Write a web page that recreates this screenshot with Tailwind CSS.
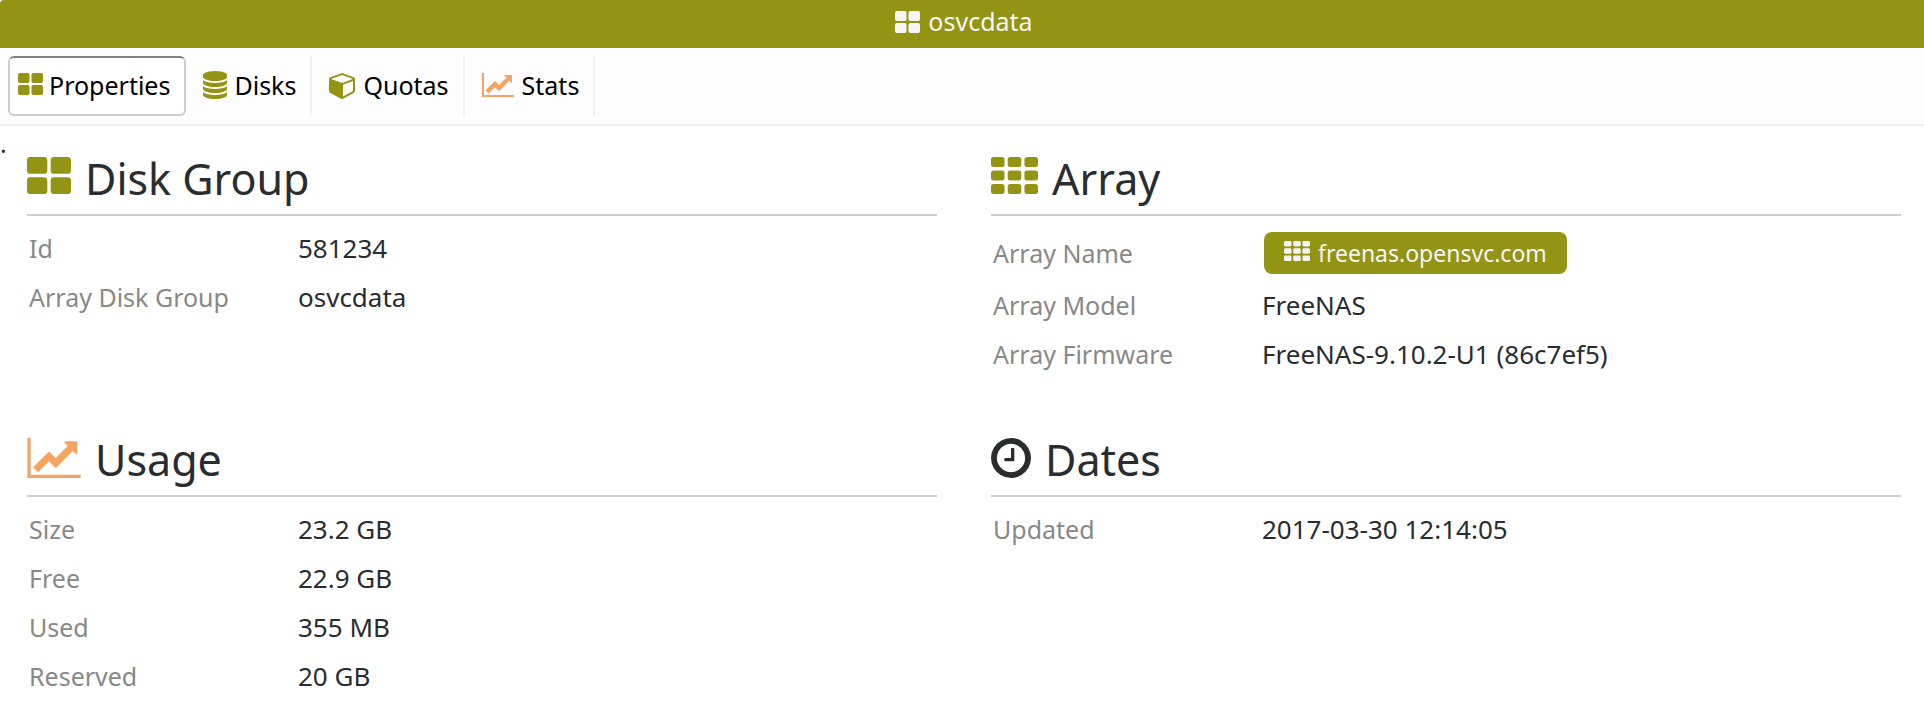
<!DOCTYPE html>
<html lang="en">
<head>
<meta charset="utf-8">
<title>osvcdata</title>
<script src="https://cdn.jsdelivr.net/npm/@tailwindcss/browser@4"></script>
</head>
<body class="min-h-screen bg-white font-['Noto_Sans',sans-serif] text-[25px] leading-[35px] text-[#2a2c2e]">
<svg class="hidden" aria-hidden="true">
  <symbol id="th-large" viewBox="0 0 1664 1408" preserveAspectRatio="none"><rect width="768" height="640" rx="128"/><rect x="896" width="768" height="640" rx="128"/><rect y="768" width="768" height="640" rx="128"/><rect x="896" y="768" width="768" height="640" rx="128"/></symbol>
  <symbol id="th" viewBox="0 0 1664 1408" preserveAspectRatio="none"><rect width="480" height="384" rx="96"/><rect x="592" width="480" height="384" rx="96"/><rect x="1184" width="480" height="384" rx="96"/><rect y="512" width="480" height="384" rx="96"/><rect x="592" y="512" width="480" height="384" rx="96"/><rect x="1184" y="512" width="480" height="384" rx="96"/><rect y="1024" width="480" height="384" rx="96"/><rect x="592" y="1024" width="480" height="384" rx="96"/><rect x="1184" y="1024" width="480" height="384" rx="96"/></symbol>
  <symbol id="database" viewBox="0 0 1536 1792"><path d="M768 768q237 0 443-43t325-127v170q0 69-103 128t-280 93.500-385 34.500-385-34.500T103 896 0 768V598q119 84 325 127t443 43zm0 768q237 0 443-43t325-127v170q0 69-103 128t-280 93.500-385 34.500-385-34.500T103 1664 0 1536v-170q119 84 325 127t443 43zm0-384q237 0 443-43t325-127v170q0 69-103 128t-280 93.500-385 34.500-385-34.500T103 1280 0 1152V982q119 84 325 127t443 43zM768 0q208 0 385 34.500T1433 128t103 128v128q0 69-103 128t-280 93.500T768 640t-385-34.500T103 512 0 384V256q0-69 103-128t280-93.500T768 0z"/></symbol>
  <symbol id="cube" viewBox="64 0 1664 1792"><path d="M896 1629l640-349V644l-640 233v752zm-64-865l698-254-698-254-698 254zm832-252v768q0 35-18 65t-49 47l-704 384q-28 16-61 16t-61-16L67 1392q-31-17-49-47t-18-65V512q0-40 23-73t61-47l704-256q22-8 44-8t44 8l704 256q38 14 61 47t23 73z" transform="translate(64 0)"/></symbol>
  <symbol id="line-chart" viewBox="0 0 2048 1536"><path d="M2048 1408v128H0V0h128v1408h1920zM1920 160v435q0 21-19.500 29.500T1866 617l-121-121-633 633q-10 10-23 10t-23-10l-233-233-416 416-192-192 585-585q10-10 23-10t23 10l233 233 464-464-121-121q-16-16-7.500-35.500T1581 128h307q14 0 23 9t9 23z"/></symbol>
  <symbol id="clock" viewBox="0 0 1536 1536"><path d="M896 416v448q0 14-9 23t-23 9H544q-14 0-23-9t-9-23v-64q0-14 9-23t23-9h224V416q0-14 9-23t23-9h64q14 0 23 9t9 23zm416 352q0-148-73-273t-198-198-273-73-273 73-198 198-73 273 73 273 198 198 273 73 273-73 198-198 73-273zm224 0q0 209-103 385.500T1153.500 1433 768 1536t-385.500-103T103 1153.500 0 768t103-385.500T382.500 103 768 0t385.500 103T1433 382.500 1536 768z"/></symbol>
</svg>

<header class="flex h-12 items-center justify-center gap-2 rounded-tl-sm bg-[#939413] pb-1 pl-1 text-[#f5f5f5]">
  <svg class="h-[22px] w-[25px] fill-current" aria-hidden="true"><use href="#th-large"/></svg>
  <h1 class="pb-0.5">osvcdata</h1>
</header>

<nav class="flex h-[78px] border-b-2 border-[#eee] bg-[#fdfdfd] px-2 py-2 text-black">
  <button type="button" class="flex h-[60px] items-center gap-[6px] rounded-md border-2 border-[#ccc] border-t-[#808285] bg-white pr-[14px] pb-0.5 pl-2"><svg class="mb-0.5 h-[22px] w-[25px] fill-[#939413]" aria-hidden="true"><use href="#th-large"/></svg>Properties</button>
  <button type="button" class="flex h-[60px] items-center gap-[7px] border-r-2 border-[#f2f2f2] pr-[14px] pb-0.5 pl-[17px]"><svg class="h-7 w-6 fill-[#939413]" aria-hidden="true"><use href="#database"/></svg>Disks</button>
  <button type="button" class="flex h-[60px] items-center gap-2 border-r-2 border-[#f2f2f2] pr-[14px] pb-0.5 pl-[17px]"><svg class="h-7 w-[26px] fill-[#939413]" aria-hidden="true"><use href="#cube"/></svg>Quotas</button>
  <button type="button" class="flex h-[60px] items-center gap-2 border-r-2 border-[#f2f2f2] pr-[14px] pb-0.5 pl-[17px]"><svg class="h-6 w-8 fill-[#f4a460]" aria-hidden="true"><use href="#line-chart"/></svg>Stats</button>
</nav>

<main>
  <p class="h-[22px]">.</p>
  <div class="grid grid-cols-2 gap-x-[54px] pr-[23px] pl-[27px]">
    <section class="min-h-[281px]">
      <h2 class="flex h-[68px] items-center gap-[14px] border-b-2 border-[#ccc] pb-[6px] text-[43px]"><svg class="mb-[6px] h-[37px] w-11 fill-[#939413]" aria-hidden="true"><use href="#th-large"/></svg>Disk Group</h2>
      <dl class="grid grid-cols-[269px_1fr] pt-2 pl-[2px]">
        <dt class="py-[7px] text-[#888]">Id</dt><dd class="py-[7px] text-[26px]">581234</dd>
        <dt class="py-[7px] text-[#888]">Array Disk Group</dt><dd class="py-[7px] text-[26px]">osvcdata</dd>
      </dl>
    </section>
    <section class="min-h-[281px]">
      <h2 class="flex h-[68px] items-center gap-[14px] border-b-2 border-[#ccc] pb-[6px] text-[43px]"><svg class="mb-[6px] h-[37px] w-[47px] fill-[#939413]" aria-hidden="true"><use href="#th"/></svg>Array</h2>
      <dl class="grid grid-cols-[269px_1fr] items-center pt-[9px] pl-[2px]">
        <dt class="py-[7px] text-[#888]">Array Name</dt><dd class="py-[7px] pl-[2px] text-[23px]"><a href="#" class="inline-flex h-[42px] items-center gap-2 rounded-lg bg-[#939413] px-5 align-top text-[#f5f5f5]"><svg class="mb-1 h-[20px] w-[26px] fill-current" aria-hidden="true"><use href="#th"/></svg>freenas.opensvc.com</a></dd>
        <dt class="py-[7px] text-[#888]">Array Model</dt><dd class="py-[7px] text-[26px]">FreeNAS</dd>
        <dt class="py-[7px] text-[#888]">Array Firmware</dt><dd class="py-[7px] text-[26px]">FreeNAS-9.10.2-U1 (86c7ef5)</dd>
      </dl>
    </section>
    <section>
      <h2 class="flex h-[68px] items-center gap-[14px] border-b-2 border-[#ccc] pb-[6px] text-[43px]"><svg class="mb-0.5 h-10 w-[54px] fill-[#f4a460]" aria-hidden="true"><use href="#line-chart"/></svg>Usage</h2>
      <dl class="grid grid-cols-[269px_1fr] pt-2 pl-[2px]">
        <dt class="py-[7px] text-[#888]">Size</dt><dd class="py-[7px] text-[26px]">23.2 GB</dd>
        <dt class="py-[7px] text-[#888]">Free</dt><dd class="py-[7px] text-[26px]">22.9 GB</dd>
        <dt class="py-[7px] text-[#888]">Used</dt><dd class="py-[7px] text-[26px]">355 MB</dd>
        <dt class="py-[7px] text-[#888]">Reserved</dt><dd class="py-[7px] text-[26px]">20 GB</dd>
      </dl>
    </section>
    <section>
      <h2 class="flex h-[68px] items-center gap-[14px] border-b-2 border-[#ccc] pb-[6px] text-[43px]"><svg class="mb-0.5 h-10 w-10 fill-current" aria-hidden="true"><use href="#clock"/></svg>Dates</h2>
      <dl class="grid grid-cols-[269px_1fr] pt-2 pl-[2px]">
        <dt class="py-[7px] text-[#888]">Updated</dt><dd class="py-[7px] text-[26px]">2017-03-30 12:14:05</dd>
      </dl>
    </section>
  </div>
</main>
</body>
</html>
